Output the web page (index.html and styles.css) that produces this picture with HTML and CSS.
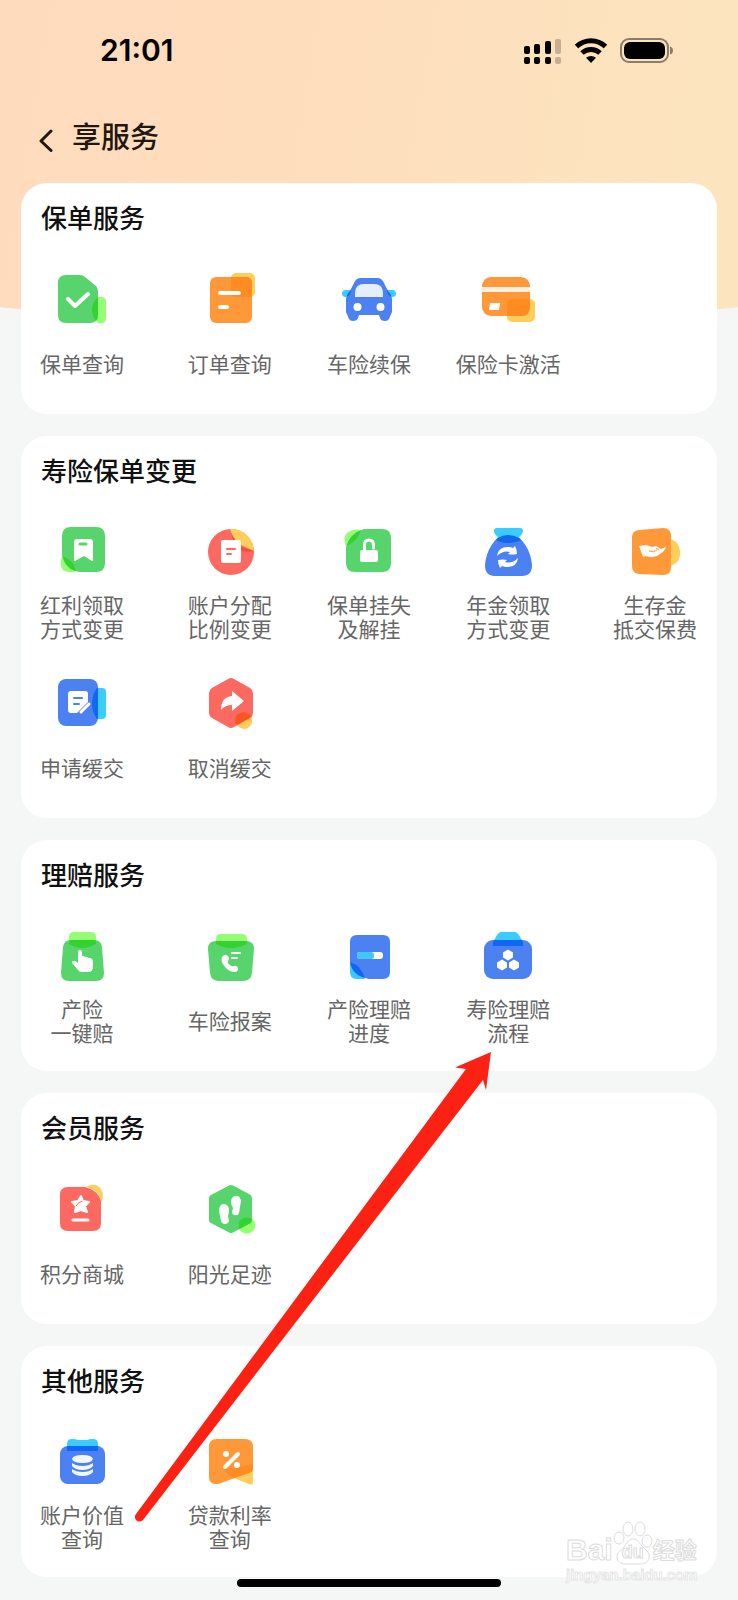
FILE: index.html
```
<!DOCTYPE html>
<html lang="zh-CN">
<head>
    <meta charset="UTF-8">
    <meta name="viewport" content="width=device-width, initial-scale=1.0">
    <title>享服务</title>
    <link rel="stylesheet" href="styles.css">
</head>
<body>
<div class="page">
    <div class="status-bar">
        <span class="time">21:01</span>
        <div class="status-icons">
            <svg width="38" height="28" viewBox="0 0 38 28">
                <rect x="0" y="10" width="6" height="8" rx="2"/>
                <rect x="10" y="8" width="6" height="10" rx="2"/>
                <rect x="21" y="5" width="6" height="13" rx="2"/>
                <rect x="31" y="3" width="6" height="15" rx="2" opacity=".22"/>
                <rect x="0" y="21" width="6" height="7" rx="2"/>
                <rect x="10" y="21" width="6" height="7" rx="2"/>
                <rect x="21" y="21" width="6" height="7" rx="2"/>
                <rect x="31" y="21" width="6" height="7" rx="2" opacity=".22"/>
            </svg>
            <svg width="34" height="28" viewBox="0 0 34 28" fill="none" stroke="#000" stroke-width="5">
                <path d="M2.500 10.500a21 21 0 0 1 29 0"/>
                <path d="M8 17a13 13 0 0 1 18 0"/>
                <path d="M17 27l-5-5.200a7.500 7.500 0 0 1 10 0z" fill="#000" stroke="none"/>
            </svg>
            <svg width="54" height="28" viewBox="0 0 54 28">
                <rect x="1" y="3" width="47" height="23" rx="8" fill="none" stroke="#000" stroke-width="2" opacity=".45"/>
                <rect x="4" y="6" width="41" height="17" rx="6"/>
                <path d="M50 10.500c4 1 4 7 0 8z" opacity=".45"/>
            </svg>
        </div>
    </div>
    <header class="nav-bar">
        <button class="back-btn" aria-label="返回">
            <svg width="16" height="24" viewBox="0 0 16 24" fill="none" stroke="#1f1810" stroke-width="3" stroke-linecap="round" stroke-linejoin="round"><path d="M13 3L3 13l10 9.500"/></svg>
        </button>
        <h1>享服务</h1>
    </header>

    <main class="content">
        <section class="block">
            <h2>保单服务</h2>
            <div class="grid">
                <a class="item" href="#">
                    <svg class="icon" viewBox="0 0 60 60">
                        <path class="green" d="M14 6h14q3 0 5 2l11 9q2 2 2 5v24q0 8-8 8H14q-8 0-8-8V14q0-8 8-8z"/>
                        <path class="lime" d="M46 28h3q5 0 5 5v16q0 5-5 5h-3q-6-6-6-13t6-13z"/>
                        <path class="line w4" d="M16 30l7 7 13-12"/>
                    </svg>
                    <span class="label">保单查询</span>
                </a>
                <a class="item" href="#">
                    <svg class="icon" viewBox="0 0 60 60">
                        <rect class="yellow" x="31" y="4" width="24" height="24" rx="5"/>
                        <rect class="orange" x="10" y="8" width="42" height="46" rx="6"/>
                        <path class="shade" d="M31 8h15q6 0 6 6v14H36q-5 0-5-5z"/>
                        <path class="line w4" d="M20 24h19M20 38h7"/>
                    </svg>
                    <span class="label">订单查询</span>
                </a>
                <a class="item" href="#">
                    <svg class="icon" viewBox="0 0 60 60">
                        <path class="blue" d="M21 9h18q3 0 5 3l5 10q4 4 4 9v12l-3 7q-1 2-4 2-4 0-5-3l-1-3H20l-1 3q-1 3-5 3-3 0-4-2l-3-7V31q0-5 4-9l5-10q2-3 5-3z"/>
                        <path class="cyan" d="M7 21h5v1q-1 5-5 6-4 0-4-3.500T7 21zM53 21h-5v1q1 5 5 6 4 0 4-3.500T53 21z"/>
                        <path fill="#e6eefb" d="M16 28v-4q0-9 9-9h10q9 0 9 9v4z"/>
                        <circle class="white" cx="18.500" cy="38" r="4"/>
                        <circle class="white" cx="41.500" cy="38" r="4"/>
                    </svg>
                    <span class="label">车险续保</span>
                </a>
                <a class="item" href="#">
                    <svg class="icon" viewBox="0 0 60 60">
                        <rect class="yellow" x="29" y="30" width="28" height="23" rx="5"/>
                        <rect class="orange" x="4" y="8" width="48" height="39" rx="9"/>
                        <path class="shade" d="M34 30h18v8q0 9-9 9H29V35q0-5 5-5z"/>
                        <path fill="#fff0df" d="M4 18h48v5H4z"/>
                        <path class="white" d="M12 34h10l-1 7H11z"/>
                    </svg>
                    <span class="label">保险卡激活</span>
                </a>
            </div>
        </section>

        <section class="block">
            <h2>寿险保单变更</h2>
            <div class="grid">
                <a class="item" href="#">
                    <svg class="icon" viewBox="0 0 60 60">
                        <path class="green" d="M19 5h25q9 0 9 9v27q0 9-9 9H28Q14 49 10 33V14q0-9 9-9z"/>
                        <path class="lime" d="M10 34q12 4 14 15-7 3-13-1-4-5-1-14z"/>
                        <path class="white" d="M25 17h13q3 0 3 3v18q0 1-1 1l-8-5-9 5q-1 0-1-1V20q0-3 3-3z"/>
                        <path class="line w3 on-green" d="M28 22h6"/>
                    </svg>
                    <span class="label">红利领取<br>方式变更</span>
                </a>
                <a class="item" href="#">
                    <svg class="icon" viewBox="0 0 60 60">
                        <circle class="red" cx="31" cy="30" r="23"/>
                        <path fill="#ffce5a" d="M30 7A23 23 0 0 1 54 29L39 22Q32 15 30 7z"/>
                        <path fill="#fb4a35" d="M31 10q2 6 5 9h5v6l13 4q-8 2-13-1-8-6-10-18z"/>
                        <rect class="white" x="21" y="18" width="20" height="23" rx="2"/>
                        <path class="line w2 on-red" d="M27 27h8M27 32h4"/>
                    </svg>
                    <span class="label">账户分配<br>比例变更</span>
                </a>
                <a class="item" href="#">
                    <svg class="icon" viewBox="0 0 60 60">
                        <path class="green" d="M25 7h18q9 0 9 9v25q0 9-9 9H16q-9 0-9-9V25Q11 11 25 7z"/>
                        <path class="lime" d="M7 24q-3-7 0-12 6-6 15-4-4 12-15 16z"/>
                        <rect class="white" x="21" y="28" width="18" height="12" rx="2"/>
                        <path class="line w3" d="M25.500 28v-5q0-5 4.500-5t4.500 5v3"/>
                    </svg>
                    <span class="label">保单挂失<br>及解挂</span>
                </a>
                <a class="item" href="#">
                    <svg class="icon" viewBox="0 0 60 60">
                        <path class="blue" d="M30 13q12 0 18 11 5 8 6 19 0 11-10 11H17Q7 54 7 43q1-11 6-19 6-11 17-11z"/>
                        <path class="cyan" d="M19 6h23q3 0 3 3 0 3-4 6l2 3q-5 3-13 3-7 0-12-3l2-3q-4-3-4-6 0-3 3-3z"/>
                        <path class="white" d="M19 34q1-9 11-9 3 0 5 1l2-2q2 4 2 8-5 1-9 0l2-2q-7-2-13 4zM40 36q-1 9-11 9-3 0-5-1l-2 2q-2-4-2-8 5-1 9 0l-2 2q7 2 13-4z"/>
                    </svg>
                    <span class="label">年金领取<br>方式变更</span>
                </a>
                <a class="item" href="#">
                    <svg class="icon" viewBox="0 0 60 60">
                        <path class="yellow" d="M43 15l8 5q4 4 4 11t-4 10l-8 5z"/>
                        <path class="orange" d="M14 8l24-2q8 0 8 8v31q0 8-8 8l-24-1q-7-1-7-8V15q0-6 7-7z"/>
                        <path class="white" d="M14 24l7-1 6 2 4-1 5 3 5-2q-2 5-6 7-6 5-14 2l-3 1z"/>
                        <path fill="none" stroke="#ff9838" d="M24 29q5 2 8-1M31 26l3 2"/>
                    </svg>
                    <span class="label">生存金<br>抵交保费</span>
                </a>
                <a class="item" href="#">
                    <svg class="icon" viewBox="0 0 60 60">
                        <rect class="blue" x="6" y="6" width="40" height="47" rx="8"/>
                        <path class="cyan" d="M45 15h5q4 0 4 4v23q0 4-4 4h-5q-5-7-5-15.500T45 15z"/>
                        <path class="white" d="M19 18h14q3 0 3 3v8L25 40h-6q-3 0-3-3V21q0-3 3-3z"/>
                        <path class="line w2 on-blue" d="M22 25h8M22 31h5"/>
                        <path class="line w3" d="M29 39l8-8"/>
                    </svg>
                    <span class="label">申请缓交</span>
                </a>
                <a class="item" href="#">
                    <svg class="icon" viewBox="0 0 60 60">
                        <path class="red" d="M28 6q3-2 6 0l16 9q3 2 3 5v20q0 3-3 5l-16 9q-3 2-6 0l-16-9q-3-2-3-5V20q0-3 3-5z"/>
                        <path class="yellow" d="M36 43q1-2 4-3l4-1 4 2q4 1 4 4v5q-1 3-4 5-4 2-7 0-5-2-6-6z"/>
                        <path class="white" d="M32 18l12 10-12 10v-6q-7 0-11 5 0-13 11-14z"/>
                    </svg>
                    <span class="label">取消缓交</span>
                </a>
            </div>
        </section>

        <section class="block">
            <h2>理赔服务</h2>
            <div class="grid">
                <a class="item" href="#">
                    <svg class="icon" viewBox="0 0 60 60">
                        <path class="green" d="M19 14h23q7 0 8 7l2 26q0 8-8 8H17q-8 0-8-8l2-26q1-7 8-7z"/>
                        <path class="lime" d="M22 6h17q5 0 5 5v7q-7 4-14 4-6 0-13-4v-7q0-5 5-5z"/>
                        <path class="white" d="M26 26q0-2 2-2t2 2v4q2-1 3 1 2-1 3 1 2-1 4 1 1 1 1 3v5q0 5-5 5h-6q-3 0-4-2l-6-7q0-3 3-2l3 2z"/>
                    </svg>
                    <span class="label">产险<br>一键赔</span>
                </a>
                <a class="item" href="#">
                    <svg class="icon" viewBox="0 0 60 60">
                        <path class="green" d="M16 15h30q8 0 8 8l-2 24q-1 8-9 8H19q-8 0-9-8L8 23q0-8 8-8z"/>
                        <path class="lime" d="M20 8h22q5 0 5 5v5q-8 4-16 4t-15-4v-5q0-5 4-5z"/>
                        <path class="white" d="M22 31q3-4 6-1 2 3 0 5-1 2 2 4 2 2 4 1 3-1 4 2 1 3-3 4-6 0-10-5-5-6-3-10z"/>
                        <path class="line w2" d="M32 27h8M32 32h5"/>
                    </svg>
                    <span class="label">车险报案</span>
                </a>
                <a class="item" href="#">
                    <svg class="icon" viewBox="0 0 60 60">
                        <path class="blue" d="M18 9h26q7 0 7 7v30q0 7-7 7H30Q13 50 11 36V16q0-7 7-7z"/>
                        <path class="cyan" d="M11 36q12 4 15 17h-9q-6 0-6-7z"/>
                        <rect class="white" x="18" y="26" width="26" height="7" rx="3"/>
                        <rect fill="#41c6f8" x="18" y="26" width="17" height="7" rx="3"/>
                    </svg>
                    <span class="label">产险理赔<br>进度</span>
                </a>
                <a class="item" href="#">
                    <svg class="icon" viewBox="0 0 60 60">
                        <rect class="blue" x="6" y="14" width="48" height="39" rx="9"/>
                        <path class="cyan" d="M23 6h14q2 0 4 3l4 7v4H15v-4l4-7q2-3 4-3z"/>
                        <path class="white" d="M30 23.500l5 3v5l-5 3-5-3v-5zM24 33.500l5 3v5l-5 3-5-3v-5zM36 33.500l5 3v5l-5 3-5-3v-5z"/>
                    </svg>
                    <span class="label">寿险理赔<br>流程</span>
                </a>
            </div>
        </section>

        <section class="block">
            <h2>会员服务</h2>
            <div class="grid">
                <a class="item" href="#">
                    <svg class="icon" viewBox="0 0 60 60">
                        <path class="red" d="M16 8h17q13 3 16 14v22q0 8-8 8H16q-8 0-8-8V16q0-8 8-8z"/>
                        <path class="yellow" d="M34 8q6-4 12-1 7 5 4 15h-1Q46 10 34 8z"/>
                        <path class="white" d="M29 17l2 5 6 1-4 4 2 6-6-2-6 2 1-6-4-4 6-1z" stroke="#fff" stroke-width="2" stroke-linejoin="round"/>
                        <path class="line w1 on-red" d="M30 22q-4 1-6 5"/>
                        <path class="line w3" d="M21 41h15"/>
                    </svg>
                    <span class="label">积分商城</span>
                </a>
                <a class="item" href="#">
                    <svg class="icon" viewBox="0 0 60 60">
                        <path class="green" d="M29 6.500q2-1 4 0l17 9q2 1 2 3.500v22q0 2.500-2 3.500l-17 9q-2 1-4 0l-17-9q-3-1-3-3.500V19q0-2.500 3-3.500z"/>
                        <path class="lime" d="M44 39q3-1 6 0 5 3 5 5v5q-1 3-5 5-3 1-6 0-5-2-5-5v-5q0-3 5-5z"/>
                        <path class="white" d="M23 25q5 0 6 5 0 4-1 7l1 5q-1 3-4 3t-4-3l-2-10q0-6 4-7zM35 17q5-1 6 5l-2 12q-1 3-4 2-3 0-3-3l1-4q-2-3-2-6 0-5 4-6z"/>
                    </svg>
                    <span class="label">阳光足迹</span>
                </a>
            </div>
        </section>

        <section class="block">
            <h2>其他服务</h2>
            <div class="grid">
                <a class="item" href="#">
                    <svg class="icon" viewBox="0 0 60 60">
                        <rect class="blue" x="8" y="14" width="45" height="38" rx="8"/>
                        <path class="cyan" d="M20 7q4 0 6 1h9q2-1 6-1 5 0 5 5v7H15v-7q0-5 5-5z"/>
                        <path fill="#f1f6ff" d="M20 27q1-4 10.500-4T41 27q-1 4-10.500 4T20 27zM20 31q4 3 10.500 3T41 31v3q-3 4-10.500 4T20 34zM20 37q4 3 10.500 3T41 37v3q-3 4-10.500 4T20 40z"/>
                    </svg>
                    <span class="label">账户价值<br>查询</span>
                </a>
                <a class="item" href="#">
                    <svg class="icon" viewBox="0 0 60 60">
                        <path class="yellow" d="M53 33v17q0 4-4 2l-15-6 19-13z"/>
                        <path class="orange" d="M17 7h28q8 0 8 8v21q0 4-4 5L18 52q-9 1-9-7V15q0-8 8-8z"/>
                        <path class="shade" d="M53 32v4q0 4-4 5l-15 5q-6-3-10-9 15-1 29-5z"/>
                        <path class="line w4" d="M25 35l13-13"/>
                        <circle class="white" cx="26" cy="22" r="3"/>
                        <circle class="white" cx="37" cy="33" r="3"/>
                    </svg>
                    <span class="label">贷款利率<br>查询</span>
                </a>
            </div>
        </section>
    </main>

    <!-- 指引箭头 -->
    <svg class="arrow" width="360" height="474" viewBox="0 0 360 474">
        <path fill="#fb2214" d="M356 4L320 19.500l11 1.500L1 466a4.500 4.500 0 0 0 7 6L348 32l3 10z"/>
    </svg>

    <!-- 水印 -->
    <div class="watermark">
        <div class="mark-logo">
            <span class="mark-bai">Bai</span>
            <span class="mark-paw">
                <svg width="40" height="44" viewBox="0 0 40 44" fill="#fff" stroke="#dcdcdc">
                    <ellipse cx="6" cy="17" rx="5" ry="6"/>
                    <ellipse cx="15" cy="8" rx="5" ry="7"/>
                    <ellipse cx="27" cy="8" rx="5" ry="7"/>
                    <ellipse cx="34" cy="20" rx="5" ry="6"/>
                    <path d="M20 18c5 0 6 4 10 8s7 6 6 11-6 6-9 6H12c-4 0-8-2-8-7s4-6 7-10 4-8 9-8z"/>
                </svg>
                <span class="mark-du">du</span>
            </span>
            <span class="mark-cn">经验</span>
        </div>
        <div class="mark-url">jingyan.baidu.com</div>
    </div>

    <div class="home-bar"></div>
</div>
</body>
</html>
```
FILE: styles.css
```
* {
    box-sizing: border-box;
}
body {
    margin: 0;
    background-color: #f5f7f7;
    color: #111;
    font-family: "Liberation Sans", "Noto Sans CJK SC", sans-serif;
}
h1, h2 {
    margin: 0;
    font-weight: 500;
}
.page {
    position: relative;
    min-height: 100vh;
    padding: 32px 21px 24px;
    overflow: hidden;
}
/* 顶部渐变背景 */
.page::before {
    content: "";
    position: absolute;
    z-index: -1;
    top: 0;
    left: 0;
    right: 0;
    height: 326px;
    background: linear-gradient(100deg, #ffdbbd 0%, #fedebd 45%, #fce4be 90%);
    clip-path: ellipse(150% 326px at 50% 0);
}

/* 状态栏 */
.status-bar {
    display: flex;
    justify-content: space-between;
    align-items: center;
    height: 36px;
    padding: 0 43px 0 79px;
}
.time {
    font-family: Inter, "Liberation Sans", sans-serif;
    font-size: 30px;
    font-weight: 600;
    color: #000;
}
.status-icons {
    display: flex;
    gap: 12px;
}

/* 标题栏 */
.nav-bar {
    display: flex;
    align-items: center;
    height: 40px;
    margin: 50px 0 25px;
    padding-left: 17px;
    gap: 18px;
}
.back-btn {
    display: flex;
    padding: 4px 0 0;
    border: none;
    background: none;
    cursor: pointer;
}
.nav-bar h1 {
    font-size: 29px;
    line-height: 40px;
    color: #1f1810;
}

/* 服务卡片 */
.content {
    display: flex;
    flex-direction: column;
    gap: 22px;
}
.block {
    padding: 20px 0 25px;
    border-radius: 26px;
    background-color: #fff;
}
.block h2 {
    margin-bottom: 34px;
    padding-left: 20px;
    font-size: 26px;
    line-height: 32px;
}
.grid {
    display: grid;
    grid-template-columns: repeat(5, 1fr);
    row-gap: 31px;
}
.item {
    display: flex;
    flex-direction: column;
    align-items: center;
    justify-self: center;
    gap: 12px;
    min-width: 84px;
    color: #666;
    text-decoration: none;
}
.item:nth-child(5n+1) {
    justify-self: start;
    margin-left: 19px;
}
.item:nth-child(5n) {
    justify-self: end;
    margin-right: 20px;
}
.icon {
    width: 60px;
    height: 60px;
    isolation: isolate;
}
.label {
    display: flow-root;
    align-content: center;
    height: 48px;
    font-size: 21px;
    line-height: 24px;
    text-align: center;
    white-space: nowrap;
}

/* 图标颜色 */
.green { fill: #57d46b; }
.orange { fill: #ff9838; }
.blue { fill: #4b81f1; }
.red { fill: #fc6961; }
.white { fill: #fff; }
.shade { fill: #ff8c22; }
.lime { fill: #95fd74; }
.yellow { fill: #ffce5a; }
.cyan { fill: #38ccff; }
.lime, .yellow, .cyan {
    mix-blend-mode: multiply;
}
.line {
    fill: none;
    stroke: #fff;
    stroke-linecap: round;
    stroke-linejoin: round;
}
.w1 { stroke-width: 1px; }
.w2 { stroke-width: 2px; }
.w3 { stroke-width: 3px; }
.w4 { stroke-width: 4px; }
.on-green { stroke: #57d46b; }
.on-red { stroke: #fc6961; }
.on-blue { stroke: #4b81f1; }

.arrow {
    position: absolute;
    top: 1048px;
    left: 135px;
    pointer-events: none;
}

/* 水印 */
.watermark {
    position: absolute;
    right: 40px;
    bottom: 16px;
    width: 132px;
    color: #fff;
    font-weight: bold;
    white-space: nowrap;
    pointer-events: none;
    -webkit-text-stroke: 1px #dcdcdc;
}
.mark-logo {
    display: flex;
    align-items: flex-end;
    height: 44px;
}
.mark-bai {
    font-size: 30px;
    line-height: 30px;
}
.mark-paw {
    position: relative;
    height: 44px;
}
.mark-du {
    position: absolute;
    left: 9px;
    bottom: 3px;
    font-size: 18px;
    line-height: 20px;
}
.mark-cn {
    font-size: 22px;
    line-height: 28px;
}
.mark-url {
    font-size: 15px;
    line-height: 20px;
    -webkit-text-stroke: 1px #e6e6e6;
}

.home-bar {
    position: absolute;
    bottom: 14px;
    left: 50%;
    width: 264px;
    height: 8px;
    margin-left: -132px;
    border-radius: 4px;
    background-color: #000;
}
```
